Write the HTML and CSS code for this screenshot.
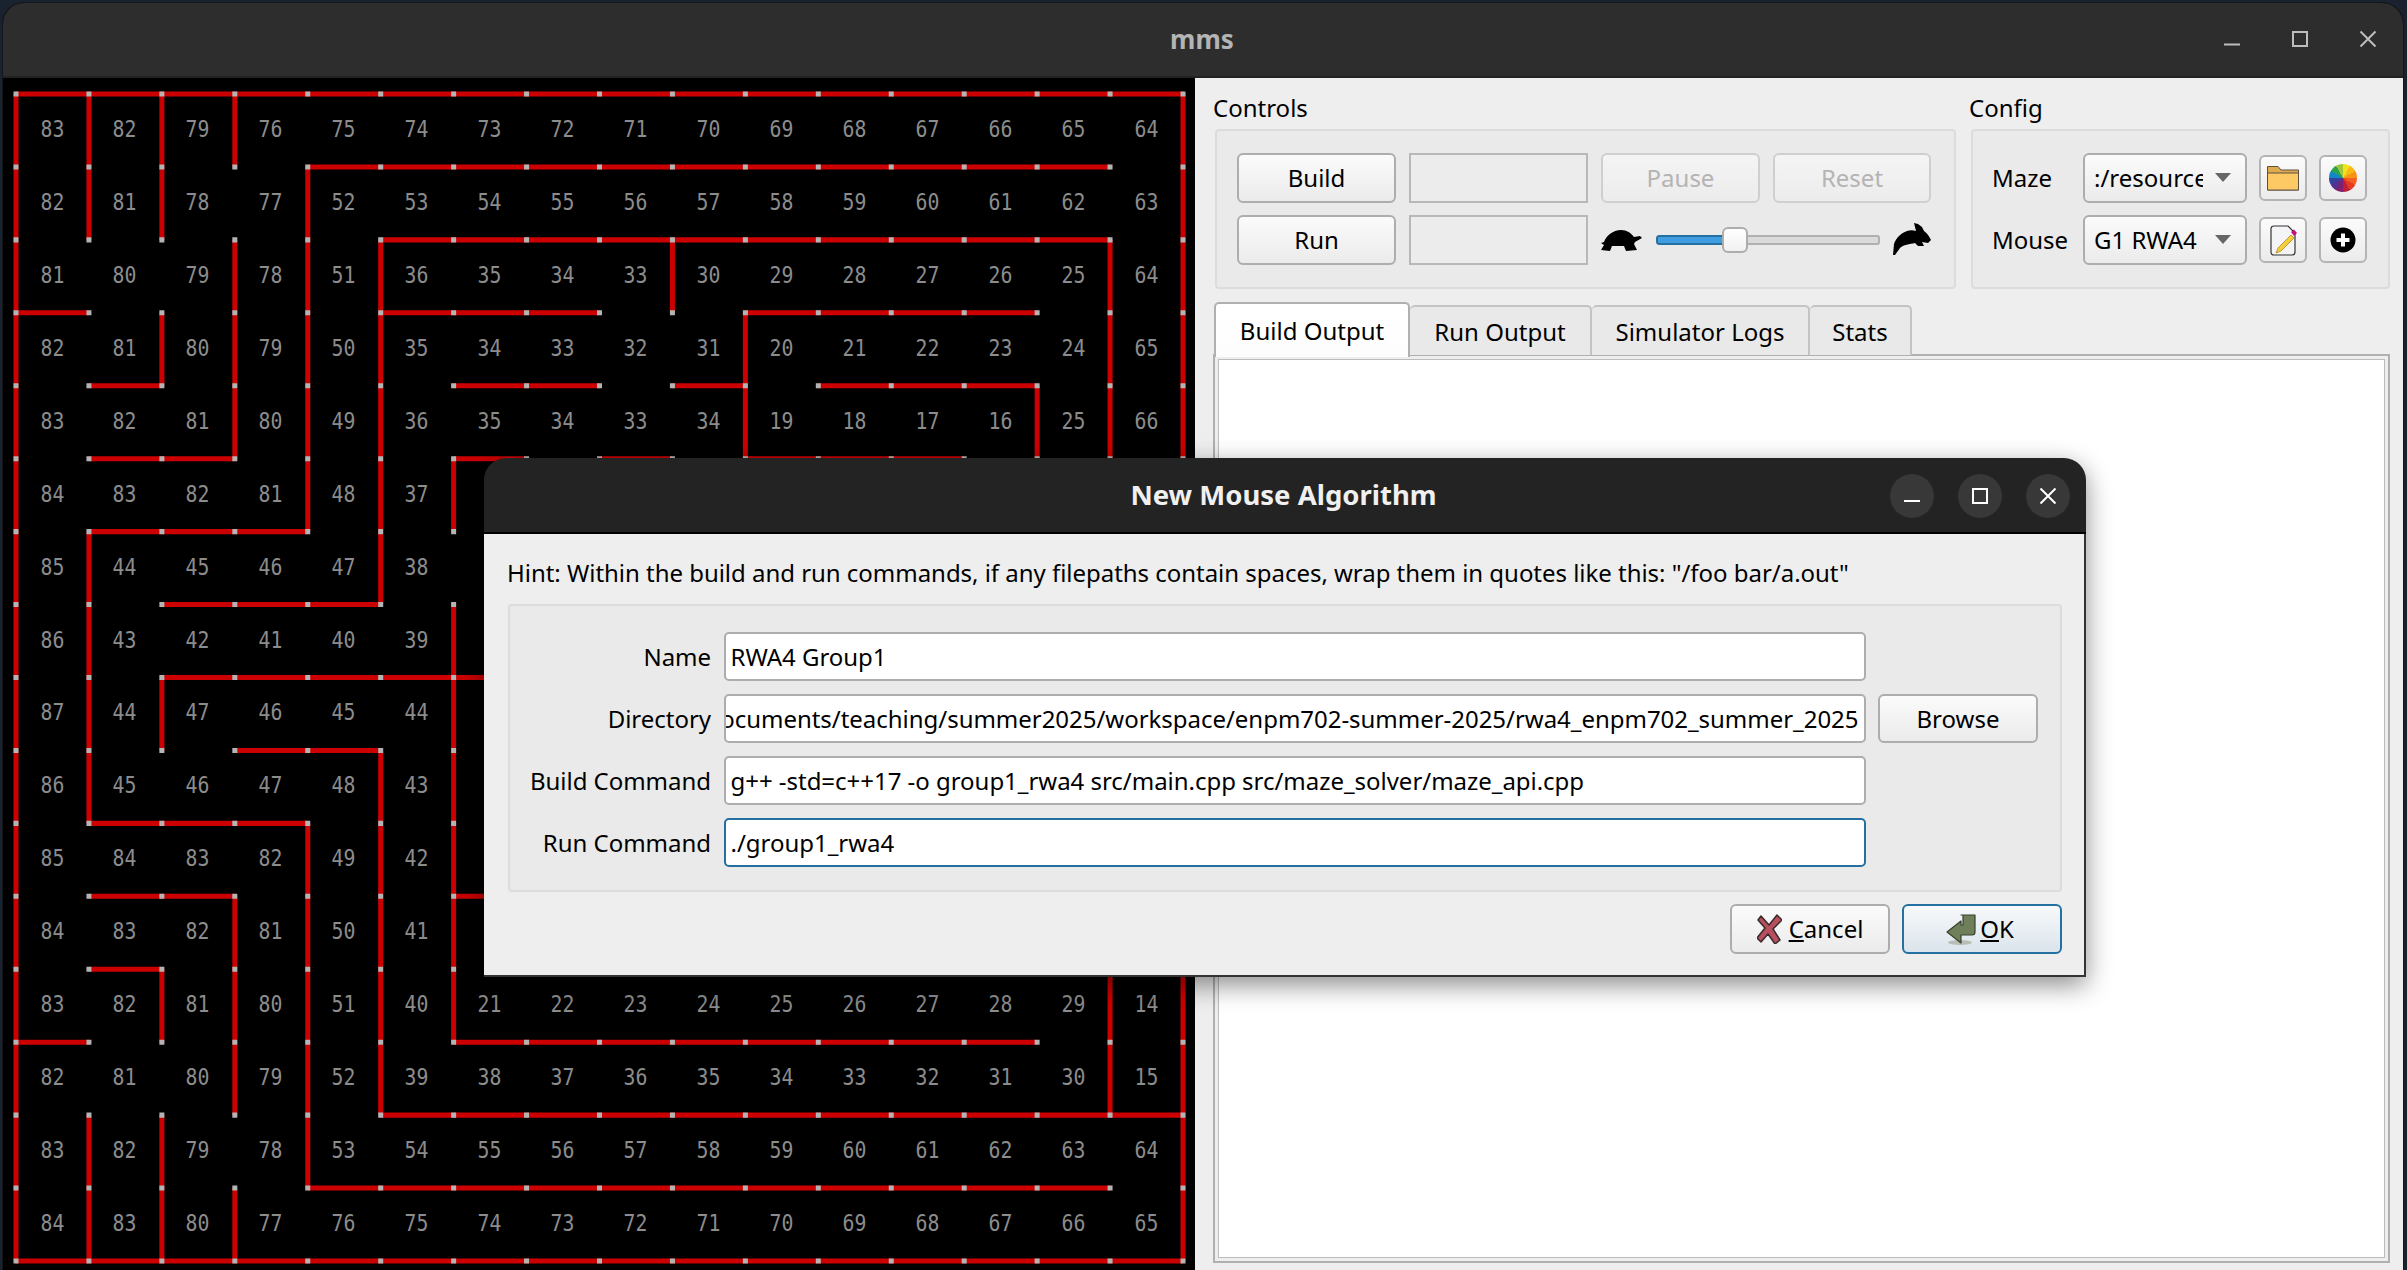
FILE: index.html
```html
<!DOCTYPE html>
<html lang="en">
<head>
<meta charset="utf-8">
<title>mms</title>
<link rel="stylesheet" href="styles.css">
</head>
<body>
<div class="screen">
  <div class="window">
    <header class="titlebar">
      <span class="title">mms</span>
      <div class="wm-buttons">
        <svg class="wm-icon" viewBox="0 0 16 16"><path d="M0 13.500H16"/></svg>
        <svg class="wm-icon" viewBox="0 0 16 16"><path d="M1 1H15V15H1Z"/></svg>
        <svg class="wm-icon" viewBox="0 0 16 16"><path d="M0.500 0.500L15.500 15.500M15.500 0.500L0.500 15.500"/></svg>
      </div>
    </header>
    <main class="main">
      <section class="maze">
        <div class="cells">
          <span>83</span><span>82</span><span>79</span><span>76</span><span>75</span><span>74</span><span>73</span><span>72</span><span>71</span><span>70</span><span>69</span><span>68</span><span>67</span><span>66</span><span>65</span><span>64</span>
          <span>82</span><span>81</span><span>78</span><span>77</span><span>52</span><span>53</span><span>54</span><span>55</span><span>56</span><span>57</span><span>58</span><span>59</span><span>60</span><span>61</span><span>62</span><span>63</span>
          <span>81</span><span>80</span><span>79</span><span>78</span><span>51</span><span>36</span><span>35</span><span>34</span><span>33</span><span>30</span><span>29</span><span>28</span><span>27</span><span>26</span><span>25</span><span>64</span>
          <span>82</span><span>81</span><span>80</span><span>79</span><span>50</span><span>35</span><span>34</span><span>33</span><span>32</span><span>31</span><span>20</span><span>21</span><span>22</span><span>23</span><span>24</span><span>65</span>
          <span>83</span><span>82</span><span>81</span><span>80</span><span>49</span><span>36</span><span>35</span><span>34</span><span>33</span><span>34</span><span>19</span><span>18</span><span>17</span><span>16</span><span>25</span><span>66</span>
          <span>84</span><span>83</span><span>82</span><span>81</span><span>48</span><span>37</span><span></span><span></span><span></span><span></span><span></span><span></span><span></span><span></span><span></span><span></span>
          <span>85</span><span>44</span><span>45</span><span>46</span><span>47</span><span>38</span><span></span><span></span><span></span><span></span><span></span><span></span><span></span><span></span><span></span><span></span>
          <span>86</span><span>43</span><span>42</span><span>41</span><span>40</span><span>39</span><span></span><span></span><span></span><span></span><span></span><span></span><span></span><span></span><span></span><span></span>
          <span>87</span><span>44</span><span>47</span><span>46</span><span>45</span><span>44</span><span></span><span></span><span></span><span></span><span></span><span></span><span></span><span></span><span></span><span></span>
          <span>86</span><span>45</span><span>46</span><span>47</span><span>48</span><span>43</span><span></span><span></span><span></span><span></span><span></span><span></span><span></span><span></span><span></span><span></span>
          <span>85</span><span>84</span><span>83</span><span>82</span><span>49</span><span>42</span><span></span><span></span><span></span><span></span><span></span><span></span><span></span><span></span><span></span><span></span>
          <span>84</span><span>83</span><span>82</span><span>81</span><span>50</span><span>41</span><span></span><span></span><span></span><span></span><span></span><span></span><span></span><span></span><span></span><span></span>
          <span>83</span><span>82</span><span>81</span><span>80</span><span>51</span><span>40</span><span>21</span><span>22</span><span>23</span><span>24</span><span>25</span><span>26</span><span>27</span><span>28</span><span>29</span><span>14</span>
          <span>82</span><span>81</span><span>80</span><span>79</span><span>52</span><span>39</span><span>38</span><span>37</span><span>36</span><span>35</span><span>34</span><span>33</span><span>32</span><span>31</span><span>30</span><span>15</span>
          <span>83</span><span>82</span><span>79</span><span>78</span><span>53</span><span>54</span><span>55</span><span>56</span><span>57</span><span>58</span><span>59</span><span>60</span><span>61</span><span>62</span><span>63</span><span>64</span>
          <span>84</span><span>83</span><span>80</span><span>77</span><span>76</span><span>75</span><span>74</span><span>73</span><span>72</span><span>71</span><span>70</span><span>69</span><span>68</span><span>67</span><span>66</span><span>65</span>
        </div>
        <svg class="walls" viewBox="0 0 16 16">
          <defs>
            <path id="wall-lines" d="M0 0H16H0 M4 1H15H4 M5 2H15H5 M0 3H1H0 M5 3H8H5 M10 3H14H10 M1 4H2H1 M6 4H8H6 M9 4H10H9 M11 4H14H11 M1 5H3H1 M6 5H7H6 M8 5H9H8 M10 5H13H10 M1 6H4H1 M2 7H5H2 M2 8H8H2 M3 9H5H3 M1 10H4H1 M1 11H3H1 M6 11H7H6 M1 12H2H1 M0 13H1H0 M6 13H14H6 M5 14H16H5 M4 15H15H4 M0 16H16H0 M0 0V16V0 M1 0V2V0 M1 6V10V6 M1 14V16V14 M2 0V2V0 M2 3V4V3 M2 8V9V8 M2 12V13V12 M2 14V16V14 M3 0V1V0 M3 2V5V2 M3 11V14V11 M3 15V16V15 M4 1V6V1 M4 10V15V10 M5 2V7V2 M5 9V14V9 M6 5V6V5 M6 7V13V7 M9 2V3V2 M10 3V5V3 M14 4V6V4 M15 2V14V2 M16 0V16V0"/>
          </defs>
          <use class="wall-red" href="#wall-lines"/>
          <use class="wall-posts" href="#wall-lines"/>
        </svg>
      </section>
      <section class="panel">
        <div class="top-row">
          <div class="group-wrap controls-wrap">
            <div class="group-label">Controls</div>
            <div class="group controls">
              <button class="btn">Build</button>
              <div class="status-box"></div>
              <button class="btn off pause">Pause</button>
              <button class="btn off">Reset</button>
              <button class="btn">Run</button>
              <div class="status-box"></div>
              <div class="speed">
                <svg class="turtle" viewBox="0 0 41 21"><path d="M3 12C5 6 12 0 20 0C26 0 30 3 33 7L39 6L41 8L34 12L33 14L36 20L25 21L23 16L11 16L9 21L0 20L3 15L0 13Z"/></svg>
                <div class="slider"><div class="slider-fill"></div><div class="slider-handle"></div></div>
                <svg class="rabbit" viewBox="0 0 38 32"><path d="M0 32L1 21C3 15 8 10 14 8C17 7 20 7 23 8L21 0L25 1L29 4L31 8C34 10 36 13 38 17L35 20L29 19L31 23L25 23L22 20C17 21 10 22 7 25L2 32Z"/></svg>
              </div>
            </div>
          </div>
          <div class="group-wrap config-wrap">
            <div class="group-label">Config</div>
            <div class="group config">
              <span class="cfg-label">Maze</span>
              <div class="combo"><span class="combo-text">:/resources/mazes/</span><i class="arrow"></i></div>
              <button class="icon-btn">
                <svg class="folder" viewBox="0 0 32 26"><path class="folder-back" d="M0.500 25V1.500H11L14 5H31.500V25Z"/><path class="folder-front" d="M0.500 25V8H31.500V25Z"/></svg>
              </button>
              <button class="icon-btn"><span class="wheel"></span></button>
              <span class="cfg-label">Mouse</span>
              <div class="combo"><span class="combo-text">G1 RWA4</span><i class="arrow"></i></div>
              <button class="icon-btn">
                <svg class="edit" viewBox="0 0 27 31"><path class="page" d="M1 4Q1 1 4 1H18L25 8V27Q25 30 22 30H4Q1 30 1 27Z"/><path class="pencil" d="M8 23L21 10L24 13L11 26L6 28Z"/><path class="eraser" d="M21 7L24 4.500L27 8L24 11Z"/></svg>
              </button>
              <button class="icon-btn"><svg class="plus" viewBox="0 0 26 26"><circle cx="13" cy="13" r="12.500"/><path d="M13 6.500V19.500M6.500 13H19.500"/></svg></button>
            </div>
          </div>
        </div>
        <div class="tabs">
          <div class="tab active">Build Output</div>
          <div class="tab">Run Output</div>
          <div class="tab">Simulator Logs</div>
          <div class="tab">Stats</div>
        </div>
        <div class="pane"><div class="output"></div></div>
      </section>
    </main>
  </div>

  <div class="dialog">
    <header class="dlg-title">
      <span class="dlg-name">New Mouse Algorithm</span>
      <div class="dlg-buttons">
        <span class="round"><svg viewBox="0 0 16 16"><path d="M0 13H16"/></svg></span>
        <span class="round"><svg viewBox="0 0 16 16"><path d="M1 1H15V15H1Z"/></svg></span>
        <span class="round"><svg viewBox="0 0 16 16"><path d="M0.500 0.500L15.500 15.500M15.500 0.500L0.500 15.500"/></svg></span>
      </div>
    </header>
    <div class="dlg-body">
      <p class="hint">Hint: Within the build and run commands, if any filepaths contain spaces, wrap them in quotes like this: "/foo bar/a.out"</p>
      <div class="form">
        <label class="form-label">Name</label>
        <div class="field">RWA4 Group1</div>
        <span></span>
        <label class="form-label">Directory</label>
        <div class="field clip"><span>ocuments/teaching/summer2025/workspace/enpm702-summer-2025/rwa4_enpm702_summer_2025</span></div>
        <button class="btn">Browse</button>
        <label class="form-label">Build Command</label>
        <div class="field">g++ -std=c++17 -o group1_rwa4 src/main.cpp src/maze_solver/maze_api.cpp</div>
        <span></span>
        <label class="form-label">Run Command</label>
        <div class="field focus">./group1_rwa4</div>
        <span></span>
      </div>
      <div class="dlg-actions">
        <button class="btn action">
          <svg class="x-icon" viewBox="0 0 25 30"><path d="M4 2L12 11L20 1L25 6L16 15L23 26L18 30L11 20L4 28L0 24L8 14L1 6Z"/></svg>
          <span><u>C</u>ancel</span>
        </button>
        <button class="btn action primary">
          <svg class="ok-icon" viewBox="0 0 30 31"><ellipse class="ok-shadow" cx="14" cy="28.500" rx="12" ry="2.500"/><path class="ok-arrow" d="M15 1H29V18Q29 21 26 21H15V29L1 18L15 7V11H17V1Z"/></svg>
          <span><u>O</u>K</span>
        </button>
      </div>
    </div>
  </div>
</div>
</body>
</html>
```

FILE: styles.css
```css
* { box-sizing: border-box; }
html, body { margin: 0; padding: 0; background: #1a2230; }
body { font-family: "Noto Sans", sans-serif; color: #000; }

.screen {
  position: relative;
  width: 2407px;
  height: 1270px;
  padding: 2px 3px 0 2px;
  overflow: hidden;
  background: #1a2230;
}

.window {
  display: flex;
  flex-direction: column;
  height: 100%;
  border: 1px solid #14171c;
  border-bottom: 0;
  border-radius: 22px 22px 0 0;
  overflow: hidden;
  background: #000;
}

.titlebar {
  position: relative;
  flex: none;
  display: flex;
  align-items: center;
  justify-content: center;
  height: 75px;
  background: #2d2d2d;
  border-bottom: 2px solid #222;
}
.title { font-size: 26px; font-weight: 700; color: #b4b4b4; margin: 0 2px 2px 0; }
.wm-buttons {
  position: absolute;
  right: 27px;
  top: 28px;
  display: flex;
  gap: 52px;
}
.wm-icon { width: 16px; height: 16px; fill: none; stroke: #bdbdbd; stroke-width: 2; overflow: visible; }

.main { flex: 1; display: flex; min-height: 0; }

/* Maze */
.maze {
  position: relative;
  flex: none;
  width: 1192px;
  padding: 15.500px 0 0 12.500px;
  background: #000;
}
.cells {
  display: grid;
  grid-template-columns: repeat(16, 72.940px);
  grid-auto-rows: 72.940px;
  font-family: "DejaVu Sans Mono", monospace;
  font-size: 23px;
  color: #8c8c8c;
}
.cells span {
  display: flex;
  align-items: center;
  justify-content: center;
  transform: scaleX(.86);
  padding-bottom: 2px;
}
.walls {
  position: absolute;
  left: 12.500px;
  top: 15.500px;
  width: 1167px;
  height: 1167px;
  overflow: visible;
  fill: none;
  stroke-width: .0686;
}
.wall-red { stroke: #cc0000; }
.wall-posts { stroke: #b4b4b4; stroke-dasharray: 0 1; stroke-linecap: square; }

/* Right panel */
.panel {
  flex: 1;
  min-width: 0;
  display: flex;
  flex-direction: column;
  padding: 14px 12px 7px 20px;
  background: #eee;
}
.top-row { display: flex; gap: 15px; }
.group-label { font-size: 24px; line-height: 32px; margin: 0 0 5px -2px; }
.controls-wrap { width: 741px; }
.config-wrap { width: 419px; }
.group {
  height: 160px;
  padding: 22px 20px;
  background: #eaeaea;
  border: 2px solid #dcdcdc;
  border-radius: 4px;
}
.controls {
  display: grid;
  grid-template-columns: 159px 179px 159px 158px;
  grid-template-rows: 50px 50px;
  column-gap: 13px;
  row-gap: 12px;
}
.btn {
  font: inherit;
  font-size: 24px;
  line-height: 1;
  color: #000;
  padding: 0;
  border: 2px solid #adadad;
  border-radius: 6px;
  background: linear-gradient(#fbfbfb, #ebebeb);
}
.btn.off {
  color: #b4b4b4;
  border-color: #cfcfcf;
  background: linear-gradient(#f4f4f4, #ececec);
}
.status-box { border: 2px solid #b8b8b8; background: #ececec; }
.speed { grid-column: span 2; display: flex; align-items: center; justify-content: space-between; }
.turtle { width: 41px; height: 21px; fill: #000; }
.rabbit { width: 38px; height: 32px; fill: #000; margin-top: -2px; }
.slider {
  position: relative;
  width: 224px;
  height: 10px;
  margin-top: -1px;
  border: 2px solid #b0b0b0;
  border-radius: 3px;
  background: #dadada;
}
.slider-fill {
  width: 66px;
  height: 100%;
  background: #3f9ee0;
  outline: 2px solid #2470a0;
  outline-offset: 0;
  border-radius: 2px;
}
.slider-handle {
  position: absolute;
  left: 64px;
  top: -10px;
  width: 26px;
  height: 26px;
  border: 2px solid #adadad;
  border-radius: 6px;
  background: linear-gradient(#fff, #f1f1f1);
}

.config {
  display: grid;
  grid-template-columns: 79px 164px 48px 48px;
  grid-template-rows: 50px 50px;
  column-gap: 12px;
  row-gap: 12px;
  align-items: center;
  padding-left: 19px;
  padding-right: 0;
}
.cfg-label { font-size: 24px; margin-top: -2px; }
.combo {
  display: flex;
  align-items: center;
  height: 50px;
  padding: 0 14px 0 9px;
  font-size: 24px;
  border: 2px solid #adadad;
  border-radius: 6px;
  background: linear-gradient(#fbfbfb, #ebebeb);
}
.combo-text { width: 109px; overflow: hidden; white-space: nowrap; margin-top: -1px; }
.arrow {
  margin-left: 12px;
  width: 0;
  height: 0;
  border-left: 8px solid transparent;
  border-right: 8px solid transparent;
  border-top: 9px solid #666;
  margin-top: -2px;
}
.icon-btn {
  display: flex;
  align-items: center;
  justify-content: center;
  width: 48px;
  height: 46px;
  padding: 0;
  border: 2px solid #b4b4b4;
  border-radius: 6px;
  background: linear-gradient(#fbfbfb, #ebebeb);
}
.folder { width: 32px; height: 26px; }
.folder-back { fill: #e0aa50; stroke: #5c5040; stroke-width: 1; }
.folder-front { fill: #fdc964; stroke: #5c5040; stroke-width: 1; }
.wheel {
  width: 28px;
  height: 28px;
  border-radius: 50%;
  background: conic-gradient(#f2e31c 0 30deg, #fbb917 30deg 60deg, #f99211 60deg 90deg, #f4601f 90deg 120deg, #e63a23 120deg 150deg, #bb1f3a 150deg 180deg, #80206f 180deg 210deg, #55308f 210deg 240deg, #37409b 240deg 270deg, #1487c9 270deg 300deg, #2aa34f 300deg 330deg, #a0c73a 330deg 360deg);
}
.edit { width: 27px; height: 31px; overflow: visible; }
.page { fill: #f4f4f6; stroke: #333; stroke-width: 1.200; }
.pencil { fill: #f5cf3a; stroke: #a98a20; stroke-width: .8; }
.eraser { fill: #c4107c; }
.plus { width: 26px; height: 26px; }
.plus circle { fill: #000; }
.plus path { stroke: #fff; stroke-width: 4; fill: none; }

/* Tabs */
.tabs { position: relative; z-index: 1; display: flex; align-items: flex-end; height: 55px; margin: 13px 0 -3px -1px; }
.tab {
  display: flex;
  align-items: center;
  justify-content: center;
  height: 50px;
  margin-bottom: 2px;
  padding-top: 1px;
  font-size: 24px;
  background: #e9e9e9;
  border: 2px solid #c4c4c4;
  border-bottom: 0;
  border-left-width: 0;
  border-radius: 5px 5px 0 0;
}
.tab:nth-child(1) { width: 196px; }
.tab:nth-child(2) { width: 182px; }
.tab:nth-child(3) { width: 218px; }
.tab:nth-child(4) { width: 102px; }
.tab.active {
  height: 55px;
  margin-bottom: 0;
  padding-top: 0;
  background: linear-gradient(#fff, #fdfdfd);
  border: 2px solid #b0b0b0;
  border-bottom: 0;
}
.pane {
  flex: 1;
  margin: 0 1px 0 -2px;
  padding: 3px;
  background: #eee;
  border: 2px solid #b0b0b0;
}
.output { height: 100%; background: #fff; border: 1px solid #bcbcbc; }

/* Dialog */
.dialog {
  position: absolute;
  left: 484px;
  top: 458px;
  display: flex;
  flex-direction: column;
  width: 1602px;
  height: 519px;
  border-radius: 22px 22px 0 0;
  box-shadow: 0 8px 26px rgba(0, 0, 0, .45);
}
.dlg-title {
  position: relative;
  flex: none;
  display: flex;
  align-items: center;
  justify-content: center;
  height: 76px;
  background: #232323;
  border-bottom: 2px solid #000;
  border-radius: 22px 22px 0 0;
}
.dlg-name { font-size: 27.500px; font-weight: 700; color: #f0f0f0; margin: 0 3px 2px 0; }
.dlg-buttons {
  position: absolute;
  right: 16px;
  top: 16px;
  display: flex;
  gap: 24px;
}
.round {
  display: flex;
  align-items: center;
  justify-content: center;
  width: 44px;
  height: 44px;
  border-radius: 50%;
  background: #383838;
}
.round svg { width: 16px; height: 16px; fill: none; stroke: #fff; stroke-width: 2; overflow: visible; }
.dlg-body {
  flex: 1;
  padding: 0 22px 0 24px;
  background: #eee;
  border-right: 2px solid #333;
  border-bottom: 2px solid #333;
}
.hint { margin: 0 0 0 -1px; padding-top: 24px; height: 70px; font-size: 24px; letter-spacing: -.03px; line-height: 30px; white-space: nowrap; }
.form {
  display: grid;
  grid-template-columns: 201px 1142px 160px;
  grid-auto-rows: 49px;
  column-gap: 12.500px;
  row-gap: 13px;
  align-items: center;
  height: 288px;
  padding: 26px 20px 0 0;
  background: #eaeaea;
  border: 2px solid #dcdcdc;
  border-radius: 4px;
}
.form-label { font-size: 24px; letter-spacing: -.03px; text-align: right; }
.field {
  display: flex;
  align-items: center;
  height: 49px;
  padding: 0 5px;
  font-size: 24px;
  letter-spacing: -.03px;
  white-space: nowrap;
  overflow: hidden;
  background: #fff;
  border: 2px solid #adadad;
  border-radius: 5px;
}
.field.clip { justify-content: flex-end; padding-left: 0; }
.field.focus { border-color: #2470a0; }
.form .btn { height: 49px; padding-top: 1px; }
.dlg-actions { display: flex; justify-content: flex-end; gap: 12px; margin-top: 12px; }
.action {
  display: flex;
  align-items: center;
  justify-content: center;
  gap: 7px;
  width: 160px;
  height: 50px;
}
.action.primary {
  padding-right: 4px;
  border-color: #2470a0;
  background: linear-gradient(#f7f9fb, #dbe4ec);
}
.x-icon { width: 25px; height: 30px; fill: #b5505c; stroke: #3a2a2c; stroke-width: 1.500; stroke-linejoin: round; }
.ok-icon { width: 30px; height: 31px; margin-right: -3px; }
.ok-arrow { fill: #6f7f5a; stroke: #39402f; stroke-width: 1.200; stroke-linejoin: round; }
.ok-shadow { fill: #b9bdb5; }
```
